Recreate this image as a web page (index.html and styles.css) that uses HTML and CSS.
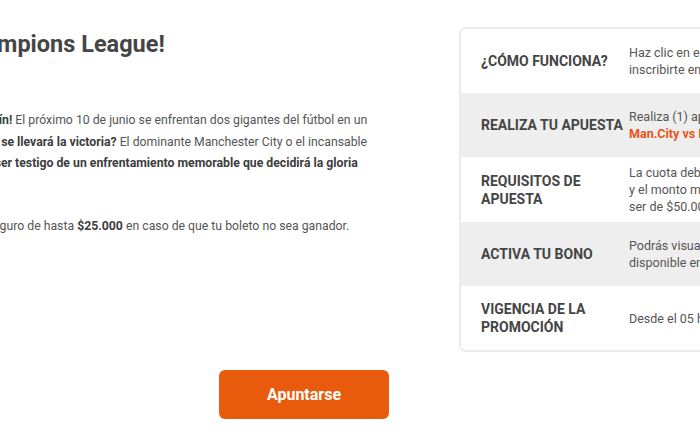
FILE: index.html
```html
<!DOCTYPE html>
<html lang="es">
<head>
<meta charset="utf-8">
<title>Champions League</title>
<link rel="stylesheet" href="styles.css">
</head>
<body>
<div class="page">
  <div class="main">
    <section class="intro">
      <h1 class="title">¡Disfruta la final de la Champions League!</h1>
      <p class="text"><strong>¡Llegó el partido más esperado: un verdadero festín!</strong> El próximo 10 de junio se enfrentan dos gigantes del fútbol en un<br>partido histórico por la gran copa europea. <strong>¿Quién se llevará la victoria?</strong> El dominante Manchester City o el incansable<br>Inter de Milán. <strong>¡Y no te pierdas la oportunidad de ser testigo de un enfrentamiento memorable que decidirá la gloria</strong><br><strong>europea!</strong></p>
      <p class="text">Apúntate ahora en esta promoción y tendrás un seguro de hasta <strong>$25.000</strong> en caso de que tu boleto no sea ganador.</p>
    </section>
    <aside class="card">
      <div class="row">
        <div class="label">¿Cómo funciona?</div>
        <div class="value">Haz clic en el botón Apuntarse para<br>inscribirte en la promoción.</div>
      </div>
      <div class="row alt">
        <div class="label">Realiza tu apuesta</div>
        <div class="value">Realiza (1) apuesta simple al partido<br><strong class="hl">Man.City vs Inter</strong></div>
      </div>
      <div class="row">
        <div class="label">Requisitos de apuesta</div>
        <div class="value">La cuota debe ser igual o mayor a 1.50<br>y el monto mínimo de la apuesta debe<br>ser de $50.000.</div>
      </div>
      <div class="row alt">
        <div class="label">Activa tu bono</div>
        <div class="value">Podrás visualizar tu bono<br>disponible en tu cuenta.</div>
      </div>
      <div class="row">
        <div class="label">Vigencia de la promoción</div>
        <div class="value">Desde el 05 hasta el 10 de junio de 2023.</div>
      </div>
    </aside>
  </div>
  <div class="actions">
    <a class="btn" href="#">Apuntarse</a>
  </div>
</div>
</body>
</html>
```
FILE: styles.css
```css
html, body {
  margin: 0;
  padding: 0;
  background: #ffffff;
  overflow: hidden;
}

body {
  font-family: Roboto, "Liberation Sans", Arial, sans-serif;
  color: #555555;
  width: 700px;
  height: 441px;
}

.page {
  margin-left: -274px;
  width: 1300px;
  padding-top: 27px;
}

.main {
  display: flex;
  align-items: flex-start;
  gap: 89px;
}

.intro {
  flex: none;
  width: 644px;
  padding-top: 4px;
}

.title {
  margin: 0 0 53px;
  font-size: 23.5px;
  line-height: 26px;
  font-weight: 700;
  color: #454545;
  white-space: nowrap;
}

.text {
  margin: 0 0 20px;
  font-size: 12.25px;
  line-height: 21.5px;
  white-space: nowrap;
  font-variant-ligatures: none;
}

.text strong {
  color: #3d3d3d;
  font-weight: 700;
}

.card {
  flex: none;
  width: 480px;
  border: 2px solid #ebebeb;
  border-radius: 7px;
  overflow: hidden;
}

.row {
  display: flex;
  align-items: center;
  min-height: 64px;
  box-sizing: border-box;
  padding: 7px 0 7px 20px;
  background: #ffffff;
}

.row.alt {
  background: #eeeeee;
}

.label {
  flex: none;
  width: 148px;
  font-size: 14px;
  line-height: 18px;
  font-weight: 700;
  color: #454545;
  text-transform: uppercase;
}

.value {
  flex: 1;
  font-size: 12.5px;
  line-height: 17px;
  color: #555555;
  white-space: nowrap;
}

.hl {
  color: #ea5418;
  font-weight: 700;
}

.actions {
  padding: 18px 0 0 493px;
}

.btn {
  display: inline-flex;
  align-items: center;
  justify-content: center;
  width: 170px;
  height: 49px;
  box-sizing: border-box;
  background: #e95b0c;
  border-radius: 6px;
  color: #ffffff;
  font-size: 16px;
  font-weight: 700;
  text-decoration: none;
}
```
